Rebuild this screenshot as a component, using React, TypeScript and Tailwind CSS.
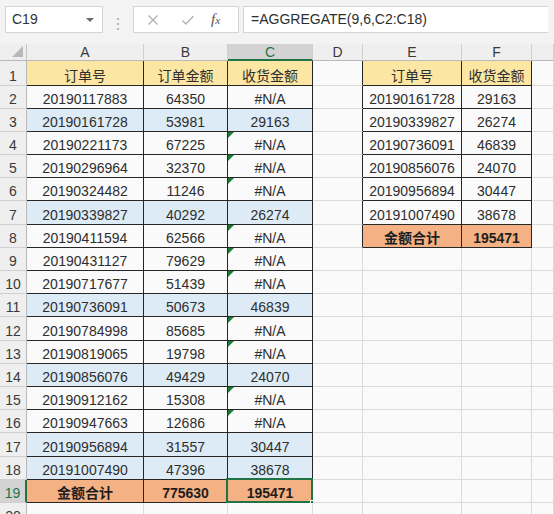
import React from 'react';

type CellData = {
  text?: string;
  bg?: string;
  bold?: boolean;
  tri?: boolean;
};

const WIDTHS = ['w-[27px]', 'w-[117px]', 'w-[84px]', 'w-[85px]', 'w-[50px]', 'w-[99px]', 'w-[70px]', 'flex-1'];
const LETTERS = ['', 'A', 'B', 'C', 'D', 'E', 'F', ''];

const orders = [
  '20190117883', '20190161728', '20190221173', '20190296964', '20190324482', '20190339827',
  '20190411594', '20190431127', '20190717677', '20190736091', '20190784998', '20190819065',
  '20190856076', '20190912162', '20190947663', '20190956894', '20191007490',
];
const amounts = [
  '64350', '53981', '67225', '32370', '11246', '40292', '62566', '79629', '51439',
  '50673', '85685', '19798', '49429', '15308', '12686', '31557', '47396',
];
const received = [
  '#N/A', '29163', '#N/A', '#N/A', '#N/A', '26274', '#N/A', '#N/A', '#N/A',
  '46839', '#N/A', '#N/A', '24070', '#N/A', '#N/A', '30447', '38678',
];
const summary = [
  ['20190161728', '29163'],
  ['20190339827', '26274'],
  ['20190736091', '46839'],
  ['20190856076', '24070'],
  ['20190956894', '30447'],
  ['20191007490', '38678'],
];

const YELLOW = 'bg-[#fce6a4]';
const ORANGE = 'bg-[#f4b183]';
const BLUE = 'bg-[#ddebf7]';

// build sheet[row][col], rows 1..20, cols 1..7
const sheet: Record<string, CellData> = {};
const put = (r: number, c: number, d: CellData) => { sheet[`${r}-${c}`] = d; };

put(1, 1, { text: '订单号', bg: YELLOW });
put(1, 2, { text: '订单金额', bg: YELLOW });
put(1, 3, { text: '收货金额', bg: YELLOW });
orders.forEach((o, i) => {
  const r = i + 2;
  const hasValue = received[i] !== '#N/A';
  const bg = hasValue ? BLUE : undefined;
  put(r, 1, { text: o, bg });
  put(r, 2, { text: amounts[i], bg });
  put(r, 3, { text: received[i], bg, tri: !hasValue && r !== 2 });
});
put(19, 1, { text: '金额合计', bg: ORANGE, bold: true });
put(19, 2, { text: '775630', bg: ORANGE, bold: true });
put(19, 3, { text: '195471', bg: ORANGE, bold: true });

put(1, 5, { text: '订单号', bg: YELLOW });
put(1, 6, { text: '收货金额', bg: YELLOW });
summary.forEach(([o, v], i) => {
  put(i + 2, 5, { text: o });
  put(i + 2, 6, { text: v });
});
put(8, 5, { text: '金额合计', bg: ORANGE, bold: true });
put(8, 6, { text: '195471', bg: ORANGE, bold: true });

const inTable = (r: number, c: number) =>
  (c >= 1 && c <= 3 && r >= 1 && r <= 19) || (c >= 5 && c <= 6 && r >= 1 && r <= 8);

const rowHeight = (r: number) => (r === 1 ? 'h-[24.5px]' : 'h-[23.2px]');

const Cell: React.FC<{ r: number; c: number }> = ({ r, c }) => {
  const d = sheet[`${r}-${c}`] || {};
  const right = inTable(r, c) || inTable(r, c + 1) ? 'border-r-[#262626]' : 'border-r-[#dadada]';
  const bottom = inTable(r, c) || inTable(r + 1, c) ? 'border-b-[#262626]' : 'border-b-[#dadada]';
  const selected = r === 19 && c === 3;
  return (
    <div
      className={`${WIDTHS[c]} ${d.bg || 'bg-[#fafafa]'} ${right} ${bottom} relative flex shrink-0 items-end justify-center border-r border-b leading-4 text-[14px] ${d.bold ? 'font-bold text-[#1e1e1e]' : 'text-[#2e2e2e]'}`}
    >
      {d.tri && (
        <div className="absolute top-0 left-0 h-0 w-0 border-t-[6px] border-r-[6px] border-t-[#1d7a34] border-r-transparent" />
      )}
      <span className="pb-[1px]">{d.text}</span>
      {selected && (
        <>
          <div className="absolute -top-[2px] -left-[2px] -right-[1px] -bottom-[1px] border-2 border-[#217346]" />
          <div className="absolute -right-[4px] -bottom-[4px] h-[6px] w-[6px] border border-white bg-[#217346]" />
        </>
      )}
    </div>
  );
};

const RowHeader: React.FC<{ r: number }> = ({ r }) => {
  const sel = r === 19;
  return (
    <div
      className={`w-[27px] shrink-0 flex items-end justify-center border-b border-b-[#d0d0d0] leading-4 text-[14px] pb-[1px] ${
        sel ? 'bg-[#d3d3d3] text-[#217346] border-r-2 border-r-[#217346]' : 'bg-[#efefef] text-[#3a3a3a] border-r border-r-[#b9b9b9]'
      }`}
    >
      {r}
    </div>
  );
};

const ColumnHeaders = () => (
  <div className="flex h-[17px]">
    <div className="relative w-[27px] shrink-0 bg-[#efefef] border-r border-r-[#c4c4c4] border-b border-b-[#b9b9b9]">
      <div className="absolute right-[3px] bottom-[3px] h-0 w-0 border-l-[11px] border-t-[11px] border-l-transparent border-t-transparent border-b-0 border-r-0"
        style={{ borderRight: '0', borderBottom: '11px solid #b8b8b8', borderLeft: '11px solid transparent', borderTop: '0' }}
      />
    </div>
    {LETTERS.slice(1).map((l, i) => {
      const c = i + 1;
      const sel = c === 3;
      return (
        <div
          key={c}
          className={`${WIDTHS[c]} shrink-0 flex items-center justify-center border-r border-r-[#d0d0d0] text-[14px] leading-4 ${
            sel ? 'bg-[#d3d3d3] text-[#217346] border-b-2 border-b-[#217346]' : 'bg-[#efefef] text-[#3a3a3a] border-b border-b-[#b9b9b9]'
          }`}
        >
          {l}
        </div>
      );
    })}
  </div>
);

const FormulaBar = () => (
  <div className="flex h-[44px] bg-[#f3f3f3] pt-[6px] pl-[5px]">
    <div className="relative flex h-[27px] w-[98px] items-center border border-[#d4d4d4] bg-white pl-[6px] text-[14px] text-[#333]">
      C19
      <div className="absolute right-[8px] top-[11px] h-0 w-0 border-l-[4px] border-r-[4px] border-t-[4px] border-l-transparent border-r-transparent border-t-[#6b6b6b]" />
    </div>
    <div className="flex w-[30px] flex-col items-center justify-center gap-[3px] pb-[2px]">
      <div className="h-[2px] w-[2px] bg-[#b5b5b5]" />
      <div className="h-[2px] w-[2px] bg-[#b5b5b5]" />
      <div className="h-[2px] w-[2px] bg-[#b5b5b5]" />
    </div>
    <div className="flex h-[27px] w-[106px] items-center border border-[#d4d4d4] bg-white">
      <svg width="12" height="12" viewBox="0 0 12 12" className="ml-[13px]">
        <path d="M1.5 1.5 L10.5 10.5 M10.5 1.5 L1.5 10.5" stroke="#b3b3b3" strokeWidth="1.4" fill="none" />
      </svg>
      <svg width="14" height="12" viewBox="0 0 14 12" className="ml-[22px]">
        <path d="M1.5 6.5 L5 10 L12.5 2" stroke="#b3b3b3" strokeWidth="1.4" fill="none" />
      </svg>
      <span className="ml-[16px] font-['Liberation_Serif',serif] italic text-[15px] text-[#555]">
        f<span className="text-[11px]">x</span>
      </span>
    </div>
    <div className="ml-[4px] flex h-[27px] flex-1 items-center border border-[#d4d4d4] border-r-0 bg-white pl-[7px] text-[14px] text-[#2e2e2e]">
      =AGGREGATE(9,6,C2:C18)
    </div>
    <div className="w-[6px]" />
  </div>
);

export default function App() {
  const rows = Array.from({ length: 20 }, (_, i) => i + 1);
  return (
    <div className="h-[514px] w-[554px] overflow-hidden bg-[#fafafa] font-['Liberation_Sans','Noto_Sans_CJK_SC',sans-serif]">
      <FormulaBar />
      <ColumnHeaders />
      {rows.map((r) => (
        <div key={r} className={`flex ${rowHeight(r)}`}>
          <RowHeader r={r} />
          {[1, 2, 3, 4, 5, 6, 7].map((c) => (
            <Cell key={c} r={r} c={c} />
          ))}
        </div>
      ))}
    </div>
  );
}
